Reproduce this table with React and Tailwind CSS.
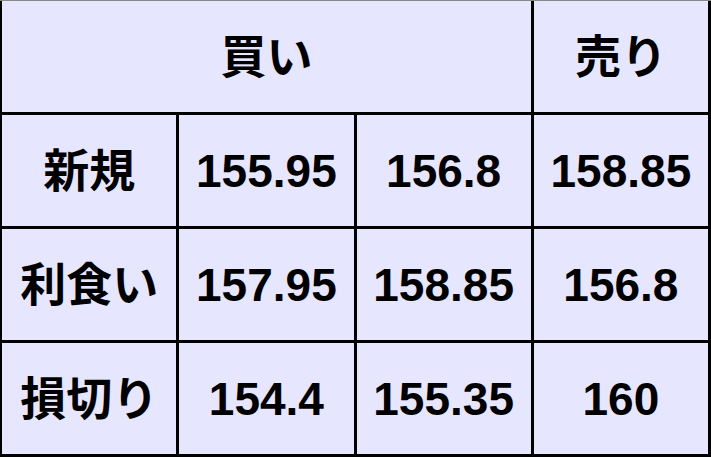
const rows = [
  ["新規", "155.95", "156.8", "158.85"],
  ["利食い", "157.95", "158.85", "156.8"],
  ["損切り", "154.4", "155.35", "160"],
];

const font = {
  fontFamily: '"Liberation Sans", "Noto Sans CJK JP", sans-serif',
};

function Cell({ children, className = "" }) {
  return (
    <div
      className={`flex items-center justify-center bg-[#e6e6ff] text-[46px] font-bold leading-none text-black ${className}`}
    >
      {children}
    </div>
  );
}

export default function App() {
  return (
    <div
      style={font}
      className="grid h-[457px] w-[711px] grid-cols-4 grid-rows-4 gap-[3px] border-t border-t-[#888] bg-black pb-[3px] pl-[2px] pr-[3px]"
    >
      <Cell className="col-span-3">買い</Cell>
      <Cell>売り</Cell>
      {rows.map((r) =>
        r.map((v, i) => <Cell key={r[0] + i}>{v}</Cell>)
      )}
    </div>
  );
}
